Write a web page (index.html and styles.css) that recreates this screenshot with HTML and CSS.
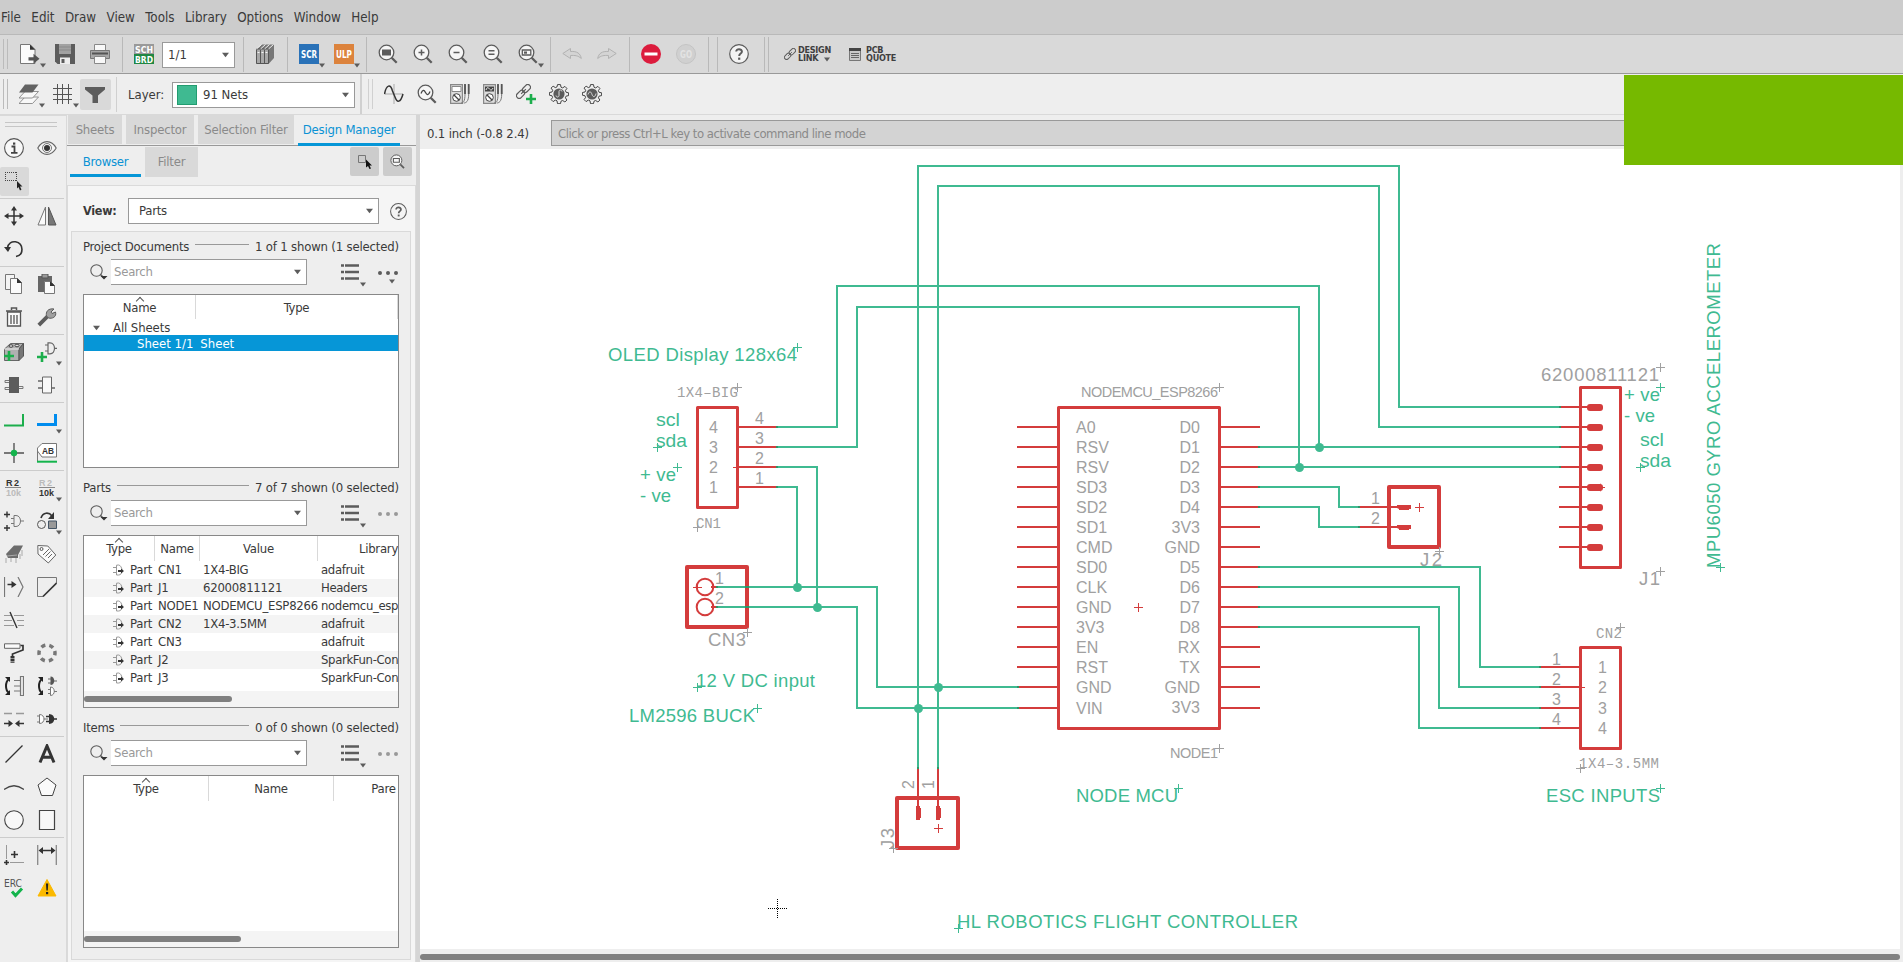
FILE: index.html
```html
<!DOCTYPE html>
<html lang="en">
<head>
<meta charset="utf-8">
<title>Schematic editor</title>
<link rel="stylesheet" href="styles.css">
</head>
<body>
<svg class="defs" width="0" height="0">
  <symbol id="drop" viewBox="0 0 6 5"><path d="M0 .5h6L3 4.5z" fill="#5c5c5c"/></symbol>
  <symbol id="loupe" viewBox="0 0 20 20"><circle cx="8.5" cy="8.5" r="7.3" fill="#f6f6f6" stroke="#5c5c5c" stroke-width="1.3"/><path d="M13.7 13.7l5 5" stroke="#5c5c5c" stroke-width="2.3"/></symbol>
  <symbol id="search" viewBox="0 0 18 16"><circle cx="6.5" cy="6.5" r="5.7" fill="none" stroke="#5c5c5c" stroke-width="1.1"/><path d="M10.5 10.5l3 3" stroke="#5c5c5c" stroke-width="1.6"/><path d="M10.5 12h7l-3.5 3.5z" fill="#333"/></symbol>
  <symbol id="list" viewBox="0 0 18 16"><path d="M0 1.5h3M0 8h3M0 14.5h3M4 1.5h14M4 8h14M4 14.5h14" stroke="#5c5c5c" stroke-width="2.4"/></symbol>
  <symbol id="dots" viewBox="0 0 20 4"><circle cx="2" cy="2" r="2"/><circle cx="10" cy="2" r="2"/><circle cx="18" cy="2" r="2"/></symbol>
  <symbol id="help" viewBox="0 0 20 20"><circle cx="10" cy="10" r="9.3" fill="#f4f4f4" stroke="#5c5c5c" stroke-width="1.2"/><path d="M7.2 7.6C7.2 4.3 13 4.500 12.900 7.700C12.800 9.600 10.200 9.600 10.200 12" fill="none" stroke="#5c5c5c" stroke-width="2"/><rect x="9.100" y="13.600" width="2.200" height="2.200" fill="#5c5c5c"/></symbol>
  <symbol id="gate" viewBox="0 0 11 12"><path d="M0 3.500h4M0 8.500h4M3.500 1.200V11h2.200c2 0 3.300-2 3.300-4.500S7.500 1 5.500 1z" fill="none" stroke="#999"/><path d="M5 6h3V4.500l3 2.500-3 2.500V8H5z" fill="#333"/></symbol>
  <symbol id="link" viewBox="0 0 14 14"><g fill="none" stroke="#5c5c5c" stroke-width="1.100"><rect x="5.500" y="1.800" width="8.500" height="5" rx="2.500" transform="rotate(-45 9.700 4.300)"/><rect x="0" y="7.200" width="8.500" height="5" rx="2.500" transform="rotate(-45 4.200 9.700)"/><path d="M4.800 9.200l4.400-4.400"/></g></symbol>
  <symbol id="meter" viewBox="0 0 20 20"><path d="M.6.6h11.800v18.800H.6z" fill="#ddd" stroke="#888" stroke-width="1.200"/><circle cx="6.500" cy="13.500" r="3.800" fill="#fff" stroke="#444"/><path d="M4 11l5 5" stroke="#444" stroke-width="1.200"/><path d="M15 1v9c0 8-2 9-4 9M18.700 1v9c0 8-3 9-5 9" fill="none" stroke="#777"/><path d="M15 0v10M18.700 0v10" stroke="#555" stroke-width="1.800"/></symbol>
  <symbol id="gear" viewBox="0 0 20 20"><path d="M8.500.6h3l.5 2.600 1.700.7 2.200-1.500 2 2-1.500 2.200.7 1.700 2.500.5v2.800l-2.500.5-.7 1.700 1.500 2.200-2 2-2.200-1.500-1.700.7-.5 2.500h-3L8 16.800l-1.700-.7-2.200 1.500-2-2 1.500-2.200-.7-1.700-2.500-.5V8.500L3 8l.7-1.700-1.600-2.200 2-2 2.200 1.500L8 2.900z" fill="#eee" stroke="#444"/><circle cx="10" cy="10" r="5.600" fill="#5c5c5c"/></symbol>
</svg>

<nav class="menubar"><span>File</span><span>Edit</span><span>Draw</span><span>View</span><span>Tools</span><span>Library</span><span>Options</span><span>Window</span><span>Help</span></nav>

<div class="toolbar main">
  <i class="handle"></i>
  <b class="btn"><svg width="20" height="20"><path d="M.5.5h9.500l5 5V19.500H.5z" fill="#fbfbfb" stroke="#777"/><path d="M10 .5v5.300h5.300z" fill="#333"/><path d="M8.500 13.200h5V9.800l6 5-6 5v-3.300h-5z" fill="#555"/></svg><svg class="drop"><use href="#drop"/></svg></b>
  <b class="btn"><svg width="20" height="20"><path d="M0 0h20v20H2.500L0 17.500z" fill="#5c5c5c"/><path d="M4 0h12v10H4z" fill="#a2a2a2"/><path d="M4 3h12M4 6h12" stroke="#8a8a8a"/><path d="M5 13.500h10V20H5z" fill="#eee"/><path d="M6.500 15h3v4h-3z" fill="#5c5c5c"/></svg></b>
  <b class="btn"><svg width="20" height="20"><path d="M4.500.5h11V7h-11z" fill="#f8f8f8" stroke="#888"/><path d="M.5 6.500h19v8H.5z" fill="#a7a7a7" stroke="#777"/><path d="M2 9.500h16" stroke="#555" stroke-width="2"/><path d="M4.500 12.500h11v7h-11z" fill="#f8f8f8" stroke="#888"/></svg></b>
  <i class="sep n"></i>
  <b class="btn sch"><svg width="20" height="20"><path d="M0 0h20v10H0z" fill="#999"/><path d="M0 10h20v10H0z" fill="#208743"/><g font-size="9" font-weight="700" fill="#fff"><text x="1" y="9" textLength="18" lengthAdjust="spacingAndGlyphs">SCH</text><text x="1" y="18.500" textLength="18" lengthAdjust="spacingAndGlyphs">BRD</text></g></svg></b>
  <div class="combo page"><span>1/1</span><svg class="drop"><use href="#drop"/></svg></div>
  <i class="sep c"></i>
  <b class="btn"><svg width="20" height="20"><path d="M.5 5L6 .5h12V14l-5 5.500H.5z" fill="#777"/><path d="M.5 5h12v14.500H.5zM4.500 5v14.500M8.500 5v14.500" fill="#a8a8a8" stroke="#555"/><path d="M.5 5l5-4.500M4.500 5l5-4.500M8.500 5l5-4.500M12.500 5l5-4.500" stroke="#eee"/><path d="M1.500 8.500h2M5.500 8.500h2M9.500 8.500h2" stroke="#f5f5f5"/></svg></b>
  <i class="sep b"></i>
  <b class="btn"><svg width="20" height="20"><path d="M0 0h20v20H0z" fill="#2a72b8"/><text x="2" y="14" font-size="10" font-weight="700" fill="#fff" textLength="16" lengthAdjust="spacingAndGlyphs">SCR</text></svg><svg class="drop"><use href="#drop"/></svg></b>
  <b class="btn"><svg width="20" height="20"><path d="M0 0h20v20H0z" fill="#dc833d"/><text x="2" y="14" font-size="10" font-weight="700" fill="#fff" textLength="16" lengthAdjust="spacingAndGlyphs">ULP</text></svg><svg class="drop"><use href="#drop"/></svg></b>
  <i class="sep n"></i>
  <b class="btn"><svg width="20" height="20"><use href="#loupe"/><path d="M4 5.500h9v6H4z" fill="#5c5c5c"/></svg></b>
  <b class="btn"><svg width="20" height="20"><use href="#loupe"/><path d="M5.500 8.500h6M8.500 5.500v6" stroke="#5c5c5c" stroke-width="1.500"/></svg></b>
  <b class="btn"><svg width="20" height="20"><use href="#loupe"/><path d="M5.500 8.500h6" stroke="#5c5c5c" stroke-width="1.500"/></svg></b>
  <b class="btn"><svg width="20" height="20"><use href="#loupe"/><path d="M5.500 6.800h6M5.500 10.200h6" stroke="#5c5c5c" stroke-width="1.500"/></svg></b>
  <b class="btn"><svg width="20" height="20"><use href="#loupe"/><path d="M4.300 6h8.500v5H4.300z" fill="none" stroke="#5c5c5c" stroke-width="1.300"/><path d="M6 7.500h3v2.200H6z" fill="#5c5c5c"/></svg><svg class="drop"><use href="#drop"/></svg></b>
  <i class="sep n"></i>
  <b class="btn"><svg width="20" height="20"><path d="M.8 9.500L8.500 4.500v3C15 7 18.500 9.500 19.300 14.500 16 11.500 13 11.300 8.500 11.500v3z" fill="#d4d4d4" stroke="#b2b2b2"/></svg></b>
  <b class="btn"><svg width="20" height="20"><path d="M19.200 9.500L11.500 4.500v3C5 7 1.500 9.500.7 14.500 4 11.500 7 11.300 11.500 11.500v3z" fill="#d4d4d4" stroke="#b2b2b2"/></svg></b>
  <i class="sep n"></i>
  <b class="btn"><svg width="20" height="20"><circle cx="10" cy="10" r="10" fill="#dc1c3d"/><path d="M3.500 10h13" stroke="#fff" stroke-width="3"/></svg></b>
  <b class="btn"><svg width="20" height="20"><circle cx="10" cy="10" r="9.500" fill="#d0d0d0" stroke="#c4c4c4"/><text x="4" y="13.700" font-size="10" fill="#e3e3e3" textLength="12" lengthAdjust="spacingAndGlyphs">GO</text></svg></b>
  <i class="sep d"></i><i class="sep e"></i>
  <b class="btn"><svg width="20" height="20"><use href="#help"/></svg></b>
  <i class="sep f"></i><i class="sep g"></i>
  <b class="btn wide"><svg width="12" height="12"><use href="#link"/></svg><span>DESIGN<br>LINK</span><svg class="drop lk"><use href="#drop"/></svg></b>
  <b class="btn wide quote"><svg width="12" height="13"><path d="M.5.500h11v12H.5z" fill="#c9c9c9" stroke="#777"/><path d="M0 1.500h12" stroke="#444" stroke-width="3"/><path d="M2 5.500h8M2 7.500h8M2 9.500h8" stroke="#666"/></svg><span>PCB<br>QUOTE</span></b>
</div>

<div class="toolbar second">
  <i class="handle"></i>
  <b class="btn tall"><svg width="20" height="20"><g stroke="#888" stroke-width=".9"><path d="M0 19.500l6-6.500h13.500l-6 6.500z" fill="#f8f8f8"/><path d="M0 14l6-6.500h13.500l-6 6.500z" fill="#f8f8f8"/></g><path d="M0 8.500L6 .5h13.500l-6 8z" fill="#626262"/></svg><svg class="drop"><use href="#drop"/></svg></b>
  <b class="btn tall gridb"><svg width="20" height="20"><path d="M0 4.500h19M0 10.500h19M0 15.500h19M4.500 0v20M9.500 0v20M15.500 0v20" stroke="#555"/></svg><svg class="drop"><use href="#drop"/></svg></b>
  <b class="btn filter"><svg width="22" height="18"><path d="M1 1h20v2.500l-7 6V17H8.500V9.500L1 3.500z" fill="#5c5c5c"/></svg></b>
  <i class="sep h"></i>
  <span class="layerlabel">Layer:</span>
  <div class="combo layer"><i class="swatch"></i><span>91 Nets</span><svg class="drop"><use href="#drop"/></svg></div>
  <i class="sep k"></i><i class="sep l"></i><i class="sep m"></i>
  <b class="btn s"><svg width="20" height="20"><path d="M10 0v20M1 10h18" stroke="#aaa"/><path d="M.5 10C2.500 0 6.500 0 8.500 7l2.500 6c2 6 5.500 6 8-3" fill="none" stroke="#333" stroke-width="1.500"/></svg></b>
  <b class="btn s"><svg width="20" height="20"><use href="#loupe"/><path d="M4 9.500c1.500-4 3-4 4.500-1s3 3 4.500-1" fill="none" stroke="#444" stroke-width="1.300"/></svg></b>
  <b class="btn s"><svg width="20" height="20"><use href="#meter"/><path d="M2 2.500h9v5H2z" fill="#fff" stroke="#888"/></svg></b>
  <b class="btn s"><svg width="20" height="20"><use href="#meter"/><path d="M2 2.500h9v5H2z" fill="#444"/><path d="M3 6c1.500-4 2.500-2 3.500-1s2 2 3.500-1" fill="none" stroke="#eee"/></svg></b>
  <b class="btn s"><svg width="20" height="20"><svg width="15" height="15"><use href="#link"/></svg><path d="M15 10v10M10 15h10" stroke="#1cae4c" stroke-width="2.600"/></svg></b>
  <b class="btn s"><svg width="20" height="20"><use href="#gear"/><path d="M7 11.500c0 2 3 2 3 0v-4c0-2 3-2 3 0" fill="none" stroke="#ddd"/></svg></b>
  <b class="btn s"><svg width="20" height="20"><use href="#gear"/><path d="M6 10.500c1.500-4 3-3 4 0s3 3 4-1" fill="none" stroke="#ddd"/></svg></b>
</div>

<main class="work">
  <aside class="tools">
    <i class="grip"></i>
    <div class="row">
      <b><svg width="20" height="20"><circle cx="10" cy="10" r="9.400" fill="#f8f8f8" stroke="#555" stroke-width="1.100"/><path d="M7.500 8.500H10.500V14.500M7 14.800h6.500" fill="none" stroke="#444" stroke-width="1.800"/><path d="M9 4.500h2.300v2.200H9z" fill="#444"/></svg></b>
      <b><svg width="20" height="20"><path d="M.8 10C5.500 1.500 14.500 1.500 19.200 10 14.500 18.500 5.500 18.500.8 10z" fill="#f6f6f6" stroke="#666" stroke-width="1.100"/><circle cx="10" cy="10" r="4.500" fill="none" stroke="#777"/><circle cx="10" cy="10" r="3" fill="#333"/></svg></b>
    </div>
    <div class="row">
      <b class="on"><svg width="20" height="20"><path d="M1 1.500h12M1 9.500h12M1.500 1v9M12.500 1v9" stroke="#444" stroke-dasharray="1 1"/><path d="M13 10l5.500 5.500h-2.500l1.500 3-1.500 1-1.500-3.500-1.500 1.500z" fill="#222"/></svg></b><b></b>
    </div>
    <i class="rule"></i>
    <div class="row">
      <b><svg width="20" height="20"><path d="M2 10h16M10 2v16" stroke="#333" stroke-width="1.500"/><path d="M10 0l3 4.500H7zM10 20l3-4.500H7zM0 10l4.500-3v6zM20 10l-4.500-3v6z" fill="#333"/></svg></b>
      <b><svg width="20" height="20"><path d="M8.500 1v18H1z" fill="#fafafa" stroke="#777"/><path d="M11.500 1v18H19z" fill="#777" stroke="#555"/></svg></b>
    </div>
    <div class="row">
      <b><svg width="20" height="20"><path d="M3.500 9C4 4 8 2.200 11.500 2.800 20 4.500 20 16 12 17.500" fill="none" stroke="#333" stroke-width="1.600"/><path d="M0 8h7l-3 5z" fill="#333"/></svg></b><b></b>
    </div>
    <i class="rule"></i>
    <div class="row">
      <b><svg width="20" height="20"><path d="M1.500.500h9v15h-9z" fill="#f4f4f4" stroke="#777"/><path d="M6.500 4.500h7l4 4v11h-11z" fill="#fafafa" stroke="#777"/><path d="M13 4v5h5z" fill="#333"/></svg></b>
      <b><svg width="20" height="20"><path d="M1 2h14v16H1z" fill="#666"/><path d="M5 0h6v4H5z" fill="#999" stroke="#555"/><path d="M7.500 7.500h6l4 4v8h-10z" fill="#fafafa" stroke="#777"/><path d="M13 7v5h5z" fill="#333"/></svg></b>
    </div>
    <div class="row">
      <b><svg width="20" height="20"><path d="M3.500 5h13v14h-13z" fill="#fafafa" stroke="#555" stroke-width="1.300"/><path d="M2 4h16M7.500 3V1h5v2" fill="none" stroke="#555" stroke-width="1.500"/><path d="M7 8v9M10 8v9M13 8v9" stroke="#555" stroke-width="1.300"/></svg></b>
      <b><svg width="20" height="20"><path d="M1.800 18.200l9-9" stroke="#5c5c5c" stroke-width="3.800"/><path d="M17 2l-3 3 1 1.500 3.500-1.500c1.500 5-3.500 7-7 6l-2-2c-1-4 1.500-8 7.500-7z" fill="#a0a0a0" stroke="#5c5c5c"/></svg></b>
    </div>
    <i class="rule"></i>
    <div class="row">
      <b><svg width="20" height="20"><path d="M.5 7l6-5.500h13L15 7v11.500H.5z" fill="#b0b0b0" stroke="#666"/><path d="M15 7l4.500-5.500V14L15 18.500z" fill="#777" stroke="#555"/><path d="M.5 7H15" stroke="#eee"/><ellipse cx="7" cy="4" rx="2" ry="1.300" fill="#ddd" stroke="#444"/><ellipse cx="13" cy="3.500" rx="2" ry="1.300" fill="#ddd" stroke="#444"/><path d="M5 9v10M0 14h10" stroke="#1cae4c" stroke-width="2.600"/></svg></b>
      <b><svg width="20" height="20"><path d="M8 3h3M8 9h3M11 .8v11h2c6 0 6-11 0-11zM17 6.300h3" fill="none" stroke="#666" stroke-width="1.200"/><path d="M5 10v10M0 15h10" stroke="#1cae4c" stroke-width="2.600"/></svg><svg class="drop"><use href="#drop"/></svg></b>
    </div>
    <div class="row">
      <b><svg width="20" height="20"><path d="M5 2h10v16H5z" fill="#5c5c5c"/><path d="M5 5.500H1v2h4M5 12.500H1v2h4M15 11.500h4v2h-4" fill="none" stroke="#777"/></svg></b>
      <b><svg width="20" height="20"><path d="M5.500 2h9v16h-9z" fill="#f8f8f8" stroke="#666"/><path d="M1 6h4.500M1 13h4.500M14.500 13H18" stroke="#666" stroke-width="1.500"/></svg></b>
    </div>
    <i class="rule"></i>
    <div class="row">
      <b><svg width="20" height="20"><path d="M0 15.500h19V4" fill="none" stroke="#1cae4c" stroke-width="2"/></svg></b>
      <b><svg width="20" height="20"><path d="M0 14.500h18.500V4" fill="none" stroke="#008cee" stroke-width="3"/></svg><svg class="drop"><use href="#drop"/></svg></b>
    </div>
    <div class="row">
      <b><svg width="20" height="20"><path d="M0 10h20M10 0v20" stroke="#777" stroke-width="1.800"/><circle cx="10" cy="10" r="3.200" fill="#13b44c"/></svg></b>
      <b><svg width="20" height="20"><path d="M5 .5h14.500v13.500H5L.5 8V5z" fill="#fff" stroke="#777"/><path d="M.5 6v13" stroke="#777"/><path d="M0 18.700h20" stroke="#13b44c" stroke-width="2"/><text x="5" y="11" font-size="9.500" font-weight="700" font-family="Liberation Sans" fill="#333" textLength="12" lengthAdjust="spacingAndGlyphs">AB</text></svg></b>
    </div>
    <i class="rule"></i>
    <div class="row lib">
      <b><svg width="20" height="20"><path d="M1 9.500h16" stroke="#888"/><text x="2" y="7.500" fill="#333" textLength="13">R2</text><text x="2" y="17.500" fill="#bbb" textLength="15">10k</text></svg></b>
      <b><svg width="20" height="20"><path d="M2 9.500h16" stroke="#888"/><text x="2" y="7.500" fill="#bbb" textLength="13">R2</text><text x="2" y="17.500" fill="#333" textLength="15">10k</text></svg><svg class="drop"><use href="#drop"/></svg></b>
    </div>
    <div class="row">
      <b><svg width="20" height="20"><path d="M0 3.500h6M3 .5v6M0 17h6M3 14v6" stroke="#333" stroke-width="1.400"/><path d="M7 7.500h3M7 12.500h3M10 4.500v11h2c6 0 6-11 0-11zM16.500 10H20" fill="none" stroke="#777"/></svg></b>
      <b><svg width="20" height="20"><circle cx="4.500" cy="13.500" r="4" fill="none" stroke="#555"/><path d="M11.500 10h8v7.500h-8z" fill="#999" stroke="#456"/><path d="M4 7C6 1 12 1 15 5" fill="none" stroke="#333" stroke-width="1.700"/><path d="M17 1v7h-6z" fill="#333"/></svg><svg class="drop"><use href="#drop"/></svg></b>
    </div>
    <div class="row">
      <b><svg width="20" height="20"><path d="M2 10L10 1.500h9L14 11v3H4z" fill="#6c6c6c"/><path d="M3 12l10-1M2 19v-5M7 18v-4M12 19v-5M16 15v-5M18 12V6" fill="none" stroke="#aaa"/></svg></b>
      <b><svg width="20" height="20"><path d="M.8 1.500l10 .5 8 9-7.500 8L1 10z" fill="#fafafa" stroke="#666"/><circle cx="4.500" cy="5" r="1.500" fill="none" stroke="#555"/><path d="M6 11l6-6M8.500 12.500l5-5M11 14l4-4" stroke="#666"/></svg></b>
    </div>
    <div class="row">
      <b><svg width="20" height="20"><path d="M.5 0v20M14 0l5 10-5 10" fill="none" stroke="#777" stroke-width="1.200"/><path d="M3.500 7.500h5" stroke="#333" stroke-width="1.500"/><path d="M7.500 4l5 3.500-5 3.500z" fill="#333"/></svg></b>
      <b><svg width="20" height="20"><path d="M6 19.500H.5V.5h19V6" fill="none" stroke="#777"/><path d="M6 19.500L19.500 6" stroke="#333" stroke-width="1.600"/></svg></b>
    </div>
    <div class="row">
      <b><svg width="20" height="20"><path d="M0 5.500h7M10 5.500h10M0 10.500h8M13 10.500h7M0 15.500h10M14 15.500h6" stroke="#999"/><path d="M6 2l7 16" stroke="#333" stroke-width="1.400"/></svg></b><b></b>
    </div>
    <div class="row">
      <b><svg width="20" height="20"><path d="M.5.800h15.500v4.500H.5z" fill="#fafafa" stroke="#666"/><path d="M16.500 2.500h2.500v4.500L8.500 11v2" fill="none" stroke="#333" stroke-width="1.700"/><path d="M8.500 13v7" stroke="#333" stroke-width="4" stroke-dasharray="2.500 .6"/></svg></b>
      <b><svg width="20" height="20"><circle cx="10" cy="10" r="8" fill="none" stroke="#777" stroke-width="3.500" stroke-dasharray="4.400 3.978" transform="rotate(-15 10 10)"/></svg></b>
    </div>
    <div class="row">
      <b><svg width="20" height="20"><path d="M5 3c-4 3-4 11 0 14" fill="none" stroke="#222" stroke-width="2"/><path d="M1 1h5v5zM1 19h5v-5z" fill="#222"/><path d="M16.500.500h3v19h-3zM10 4.500h6M10 10h6M10 15h6" fill="none" stroke="#777" stroke-width="1.200"/></svg></b>
      <b><svg width="20" height="20"><path d="M5 3c-4 3-4 11 0 14" fill="none" stroke="#222" stroke-width="2"/><path d="M1 1h5v5zM1 19h5v-5z" fill="#222"/><path d="M11 3h3M11 7h3M16 5h4" stroke="#666"/><path d="M13.500.500v8.500c5 0 5-8.500 0-8.500z" fill="#555"/><path d="M11 13.500h3M11 17.500h3M17 15.500h3M13.500 11v8.500c5 0 5-8.500 0-8.500z" fill="#fff" stroke="#777"/></svg></b>
    </div>
    <div class="row">
      <b><svg width="20" height="20"><path d="M0 4.500h8M12 4.500h8" stroke="#999" stroke-width="1.500"/><path d="M0 14.500h5M15 14.500h5" stroke="#333" stroke-width="1.500"/><path d="M4.500 11l4.500 3.500-4.500 3.500zM15.500 11L11 14.500l4.500 3.500z" fill="#333"/></svg></b>
      <b><svg width="20" height="20"><path d="M0 7h2.500M0 13h2.500M2.500 5.500v9c6 0 6-9 0-9zM7 10h4" fill="#fff" stroke="#777"/><path d="M12 5v10c7 0 7-10 0-10z" fill="#333"/><path d="M9 7.500h4M9 12.500h4M16 10h4" stroke="#333" stroke-width="1.300"/></svg></b>
    </div>
    <i class="rule"></i>
    <div class="row">
      <b><svg width="20" height="20"><path d="M1.500 18.500l17-17" stroke="#333" stroke-width="1.300"/></svg></b>
      <b><svg width="20" height="20"><path d="M3 18.500L10 2l7 16.500M5 13.200h10" fill="none" stroke="#333" stroke-width="3"/></svg></b>
    </div>
    <div class="row">
      <b><svg width="20" height="20"><path d="M0 12.500q10-7.500 20 0" fill="none" stroke="#444" stroke-width="1.300"/></svg></b>
      <b><svg width="20" height="20"><path d="M10 1l9 7-3.500 10.500h-11L1 8z" fill="#fafafa" stroke="#444"/></svg></b>
    </div>
    <div class="row">
      <b><svg width="20" height="20"><circle cx="10" cy="10" r="9.300" fill="#f8f8f8" stroke="#444" stroke-width="1.100"/></svg></b>
      <b><svg width="20" height="20"><path d="M2.500.500h15v19h-15z" fill="#f8f8f8" stroke="#444" stroke-width="1.200"/></svg></b>
    </div>
    <i class="rule"></i>
    <div class="row">
      <b><svg width="20" height="20"><path d="M2.500 0v14M6 17.500h14" stroke="#999"/><path d="M0 17.500h5M2.500 15v5M7 9.500h7M10.500 6v7" stroke="#333" stroke-width="1.600"/></svg></b>
      <b><svg width="20" height="20"><path d="M.7 0v20M19.300 0v20" stroke="#888" stroke-width="1.300"/><path d="M4 5.500h12" stroke="#333" stroke-width="1.500"/><path d="M1.500 5.500L6 2v7zM18.500 5.500L14 2v7z" fill="#333"/></svg></b>
    </div>
    <div class="row">
      <b><svg width="20" height="20"><text x="0" y="8.500" font-size="11" fill="#555" textLength="18" lengthAdjust="spacingAndGlyphs">ERC</text><path d="M8 13.500l3.500 4L18 10.500" fill="none" stroke="#13b44c" stroke-width="3"/></svg></b>
      <b><svg width="20" height="20"><path d="M10 1.500l9 16.500H1z" fill="#fbb900" stroke="#fbb900" stroke-linejoin="round"/><path d="M9 5.500h2.200l-.4 7H9.400z" fill="#222"/><path d="M9 14h2.200v2.200H9z" fill="#222"/></svg></b>
    </div>
  </aside>

  <section class="panel">
    <div class="tabs"><span style="width:54px">Sheets</span><span style="width:68px">Inspector</span><span style="width:96px">Selection Filter</span><span class="active" style="width:102px">Design Manager</span></div>
    <div class="subtabs"><span class="active">Browser</span><span class="off">Filter</span>
      <b><svg width="14" height="14"><path d="M.5.500h7v7h-7z" fill="none" stroke="#777"/><path d="M8 4.500l6 6h-2.500l1.500 3-1.500.500-1.500-3L8 12.500z" fill="#111"/></svg></b>
      <b><svg width="15" height="15" viewBox="0 0 20 20"><use href="#loupe"/><path d="M4.500 6h8v5h-8z" fill="none" stroke="#5c5c5c" stroke-width="1.500"/></svg></b>
    </div>
    <div class="pane">
      <div class="view"><strong>View:</strong><div class="combo"><span>Parts</span><svg class="drop"><use href="#drop"/></svg></div><svg width="17" height="17" viewBox="0 0 20 20"><use href="#help"/></svg></div>
      <div class="group">
        <div class="title"><span>Project Documents</span><i></i><span>1 of 1 shown (1 selected)</span></div>
        <div class="find"><svg width="18" height="16"><use href="#search"/></svg><div class="combo"><span>Search</span><svg class="drop"><use href="#drop"/></svg></div><svg class="li" width="18" height="16"><use href="#list"/></svg><svg class="drop d1"><use href="#drop"/></svg><svg class="dt" width="20" height="4"><use href="#dots"/></svg><svg class="drop d2"><use href="#drop"/></svg></div>
        <div class="table docs">
          <div class="head"><span>Name<em></em></span><span>Type</span></div>
          <div class="tree"><svg class="drop"><use href="#drop"/></svg>All Sheets</div>
          <div class="tree sel"><span>Sheet 1/1</span><span>Sheet</span></div>
        </div>
        <div class="title"><span>Parts</span><i></i><span>7 of 7 shown (0 selected)</span></div>
        <div class="find dim"><svg width="18" height="16"><use href="#search"/></svg><div class="combo"><span>Search</span><svg class="drop"><use href="#drop"/></svg></div><svg class="li" width="18" height="16"><use href="#list"/></svg><svg class="drop d1"><use href="#drop"/></svg><svg class="dt" width="20" height="4"><use href="#dots"/></svg></div>
        <div class="table parts">
          <div class="head"><span>Type<em></em></span><span>Name</span><span>Value</span><span>Library</span></div>
          <div class="part"><svg><use href="#gate"/></svg><span>Part</span><span>CN1</span><span>1X4-BIG</span><span>adafruit</span></div>
          <div class="part"><svg><use href="#gate"/></svg><span>Part</span><span>J1</span><span>62000811121</span><span>Headers</span></div>
          <div class="part"><svg><use href="#gate"/></svg><span>Part</span><span>NODE1</span><span>NODEMCU_ESP8266</span><span>nodemcu_esp</span></div>
          <div class="part"><svg><use href="#gate"/></svg><span>Part</span><span>CN2</span><span>1X4-3.5MM</span><span>adafruit</span></div>
          <div class="part"><svg><use href="#gate"/></svg><span>Part</span><span>CN3</span><span></span><span>adafruit</span></div>
          <div class="part"><svg><use href="#gate"/></svg><span>Part</span><span>J2</span><span></span><span>SparkFun-Conn</span></div>
          <div class="part"><svg><use href="#gate"/></svg><span>Part</span><span>J3</span><span></span><span>SparkFun-Conn</span></div>
          <div class="scroll"><i style="width:148px"></i></div>
        </div>
        <div class="title"><span>Items</span><i></i><span>0 of 0 shown (0 selected)</span></div>
        <div class="find dim"><svg width="18" height="16"><use href="#search"/></svg><div class="combo"><span>Search</span><svg class="drop"><use href="#drop"/></svg></div><svg class="li" width="18" height="16"><use href="#list"/></svg><svg class="drop d1"><use href="#drop"/></svg><svg class="dt" width="20" height="4"><use href="#dots"/></svg></div>
        <div class="table items">
          <div class="head"><span>Type<em></em></span><span>Name</span><span class="cut">Pare</span></div>
          <div class="scroll"><i style="width:157px"></i></div>
        </div>
      </div>
    </div>
  </section>

  <section class="editor">
    <div class="status"><span>0.1 inch (-0.8 2.4)</span><div class="command">Click or press Ctrl+L key to activate command line mode</div></div>
    <svg class="sheet" width="1480" height="800" viewBox="420 149 1480 800">
      <rect class="body heavy" x="687" y="567" width="60" height="60"/>
      <g class="net">
        <path d="M918 768V166H1399V407H1561M938 768V186H1379V427H1561"/>
        <path d="M776 427H837V286H1319V447M776 447H857V307H1299V467"/>
        <path d="M776 467H817V607M776 487H797V587"/>
        <path d="M715 587H877V687H1019M715 607H857V708H1019"/>
        <path d="M1258 447H1561M1258 467H1561"/>
        <path d="M1258 487H1339V507H1360M1258 507H1319V527H1360"/>
        <path d="M1258 567H1480V667H1541M1258 587H1459V687H1541M1258 607H1439V708H1541M1258 627H1419V728H1541"/>
      </g>
      <g class="dot"><circle cx="1319.500" cy="447.500" r="4.500"/><circle cx="1299.500" cy="467.500" r="4.500"/><circle cx="797.500" cy="587.500" r="4.500"/><circle cx="817.500" cy="607.500" r="4.500"/><circle cx="938.500" cy="687.500" r="4.500"/><circle cx="918.500" cy="708.500" r="4.500"/></g>
      <g class="pin">
        <path d="M738 427h38M738 447h38M738 467h38M738 487h38M711 587h5M711 607h5"/>
        <path d="M1017 427h41M1017 447h41M1017 467h41M1017 487h41M1017 507h41M1017 527h41M1017 547h41M1017 567h41M1017 587h41M1017 607h41M1017 627h41M1017 647h41M1017 667h41M1019 687h39M1019 708h39"/>
        <path d="M1220 427h40M1220 447h38M1220 467h38M1220 487h38M1220 507h38M1220 527h40M1220 547h40M1220 567h38M1220 587h38M1220 607h38M1220 627h38M1220 647h40M1220 667h40M1220 687h40M1220 708h40"/>
        <path d="M1561 407h27M1561 427h27M1561 447h27M1561 467h27M1559 487h29M1559 507h29M1559 527h29M1559 547h29"/>
        <path d="M1360 507h38M1360 527h38M1541 667h39M1541 687h39M1541 708h39M1541 728h39M918 768v39M938 768v39"/>
      </g>
      <path class="joint" d="M776 427h2M776 447h2M776 467h2M776 487h2M716 587h2M716 607h2M1017 687h2M1017 708h2M1258 447h2M1258 467h2M1258 487h2M1258 507h2M1258 567h2M1258 587h2M1258 607h2M1258 627h2M1559 407h2M1559 427h2M1559 447h2M1559 467h2M1358 507h2M1358 527h2M1539 667h2M1539 687h2M1539 708h2M1539 728h2M917 768h2M937 768h2M745 587h4M745 607h4"/>
      <g class="body">
        <rect x="697.500" y="407.500" width="40" height="100"/><rect x="1058.500" y="407.500" width="161" height="321"/><rect x="1580.500" y="387.500" width="40" height="180"/><rect x="1580.500" y="647.500" width="40" height="101"/>
        <g class="heavy"><rect x="1389" y="487" width="50" height="60"/><rect x="897" y="798" width="61" height="50"/></g>
        <g class="ring"><circle cx="705" cy="587" r="8.300"/><circle cx="705" cy="607" r="8.300"/></g>
      </g>
      <g class="pad">
        <rect x="1587" y="404" width="16" height="7" rx="3"/><rect x="1587" y="424" width="16" height="7" rx="3"/><rect x="1587" y="444" width="16" height="7" rx="3"/><rect x="1587" y="464" width="16" height="7" rx="3"/><rect x="1587" y="484" width="16" height="7" rx="3"/><rect x="1587" y="504" width="16" height="7" rx="3"/><rect x="1587" y="524" width="16" height="7" rx="3"/><rect x="1587" y="544" width="16" height="7" rx="3"/>
        <path d="M1600 483l2 4h3v1h-3l-2 4zM1397 505h14v4h-2v1h-10v-1l-2-1zM1397 525h14v4h-2v1h-10v-1l-2-1zM916 806h4v2h1v10h-1v2h-4zM936 806h4v2h1v10h-1v2h-4z"/>
      </g>
      <path class="cross red" d="M1134 607.500h9M1138.500 603v9M1415 507.500h9M1419.500 503v9M934 828.500h9M938.500 824v9M733 467.500h6M1581 687.500h4M693 587.500h9M697.500 585v5"/>
      <path class="cross green" d="M793 347.500h9M797.500 343v9M653 447.500h9M657.500 443v9M673 467.500h9M677.500 463v9M693 687.500h9M697.500 683v9M753 708.500h9M757.500 704v9M954 928.500h9M958.500 924v9M1174 788.500h9M1178.500 784v9M1656 387.500h9M1660.500 383v9M1636 467.500h9M1640.500 463v9M1716 567.500h9M1720.500 563v9M1656 788.500h9M1660.500 784v9"/>
      <path class="cross gray" d="M733 387.500h9M737.500 383v9M693 527.500h9M697.500 523v9M743 632.500h9M747.500 628v9M889 848.500h9M893.500 844v9M1215 387.500h9M1219.500 383v9M1215 748.500h9M1219.500 744v9M1435 551.500h9M1439.500 547v9M1656 367.500h9M1660.500 363v9M1656 571.500h9M1660.500 567v9M1616 627.500h9M1620.500 623v9M1576 768.500h9M1580.500 764v9"/>
      <path class="cursor" d="M768 908.500h19M777.500 899v19"/>
      <g class="note">
        <text x="608" y="361" textLength="189">OLED Display 128x64</text><text x="656" y="426" textLength="24" lengthAdjust="spacingAndGlyphs">scl</text><text x="656" y="447" textLength="31" lengthAdjust="spacingAndGlyphs">sda</text><text x="640" y="481" textLength="36">+ ve</text><text x="640" y="502" textLength="31">- ve</text>
        <text x="696" y="687" textLength="119">12 V DC input</text><text x="629" y="722" textLength="126">LM2596 BUCK</text><text x="1076" y="802" textLength="102">NODE MCU</text><text x="957" y="928" textLength="341">HL ROBOTICS FLIGHT CONTROLLER</text><text x="1546" y="802" textLength="114">ESC INPUTS</text>
        <text x="1624" y="401" textLength="36">+ ve</text><text x="1624" y="422" textLength="31">- ve</text><text x="1640" y="446" textLength="24" lengthAdjust="spacingAndGlyphs">scl</text><text x="1640" y="467" textLength="31" lengthAdjust="spacingAndGlyphs">sda</text>
        <text transform="translate(1720 568) rotate(-90)" textLength="325">MPU6050 GYRO ACCELEROMETER</text>
      </g>
      <g class="ref big"><text x="708" y="646" textLength="38">CN3</text><text x="1541" y="381" textLength="118">62000811121</text><text x="1639" y="585" textLength="21">J1</text><text x="1420" y="566" textLength="22">J2</text><text transform="translate(894 849) rotate(-90)" textLength="21">J3</text></g>
      <g class="ref small"><text x="1081" y="397" textLength="137">NODEMCU_ESP8266</text><text x="1170" y="758" textLength="48">NODE1</text></g>
      <g class="ref vector"><text x="677" y="397" textLength="61">1X4–BIG</text><text x="696" y="528" textLength="25">CN1</text><text x="1596" y="638" textLength="26">CN2</text><text x="1579" y="768" textLength="80">1X4–3.5MM</text></g>
      <g class="ref mid">
        <text x="755" y="424">4</text><text x="755" y="444">3</text><text x="755" y="464">2</text><text x="755" y="484">1</text>
        <text x="709" y="433">4</text><text x="709" y="453">3</text><text x="709" y="473">2</text><text x="709" y="493">1</text>
        <text x="715" y="584">1</text><text x="715" y="604">2</text><text x="1371" y="504">1</text><text x="1371" y="524">2</text>
        <text x="1552" y="665">1</text><text x="1552" y="685">2</text><text x="1552" y="705">3</text><text x="1552" y="725">4</text>
        <text x="1598" y="673">1</text><text x="1598" y="693">2</text><text x="1598" y="714">3</text><text x="1598" y="734">4</text>
        <text transform="translate(914 789) rotate(-90)">2</text><text transform="translate(934 789) rotate(-90)">1</text>
        <text x="1076" y="433">A0</text><text x="1076" y="453">RSV</text><text x="1076" y="473">RSV</text><text x="1076" y="493">SD3</text><text x="1076" y="513">SD2</text><text x="1076" y="533">SD1</text><text x="1076" y="553">CMD</text><text x="1076" y="573">SD0</text><text x="1076" y="593">CLK</text><text x="1076" y="613">GND</text><text x="1076" y="633">3V3</text><text x="1076" y="653">EN</text><text x="1076" y="673">RST</text><text x="1076" y="693">GND</text><text x="1076" y="714">VIN</text>
        <g text-anchor="end"><text x="1200" y="433">D0</text><text x="1200" y="453">D1</text><text x="1200" y="473">D2</text><text x="1200" y="493">D3</text><text x="1200" y="513">D4</text><text x="1200" y="533">3V3</text><text x="1200" y="553">GND</text><text x="1200" y="573">D5</text><text x="1200" y="593">D6</text><text x="1200" y="613">D7</text><text x="1200" y="633">D8</text><text x="1200" y="653">RX</text><text x="1200" y="673">TX</text><text x="1200" y="693">GND</text><text x="1200" y="713">3V3</text></g>
      </g>
    </svg>
    <div class="hscroll"><i></i></div>
  </section>
</main>
<div class="overlay"></div>
</body>
</html>
```
FILE: styles.css
```css
* { box-sizing: border-box; }
html, body { height: 962px; overflow: hidden; }
body { margin: 0; display: flex; flex-direction: column; background: #eee; color: #3a3a3a; font: 13px/16px "DejaVu Sans Condensed", "DejaVu Sans", sans-serif; font-stretch: condensed; letter-spacing: -.25px; white-space: nowrap; position: relative; }
svg { display: block; flex: none; letter-spacing: 0; }
.defs { position: absolute; }
.drop { width: 6px; height: 5px; }

.menubar { height: 35px; flex: none; background: #ccc; border-bottom: 1px solid #b9b9b9; display: flex; align-items: center; gap: 10.400px; padding: 1px 0 0 1px; font-size: 13.300px; letter-spacing: 0; }

.toolbar { display: flex; align-items: center; flex: none; }
.main { height: 39px; background: #d9d9d9; border-bottom: 1px solid #999; }
.second { height: 41px; background: #eee; border-bottom: 1px solid #d9d9d9; }
.handle { width: 20px; height: 30px; flex: none; background: linear-gradient(#bbb, #bbb) 3px 0/1px 100% no-repeat, linear-gradient(#bbb, #bbb) 7px 0/1px 100% no-repeat; }
.btn { width: 35px; flex: none; display: flex; align-items: center; position: relative; }
.btn .drop { position: absolute; left: 20px; top: 19px; }
.sep { width: 1px; height: 35px; background: #b9b9b9; flex: none; }
.sep.n { margin: 0 11px 0 -3px; }
.sep.c { margin: 0 12px 0 8px; }
.sep.b { margin: 0 11px 0 -4px; }
.sep.d { margin: 0 8px 0 -3px; }
.sep.e { margin-right: 11px; }
.sep.f { margin-right: 3px; }
.sep.g { margin-right: 15px; }
.sch { width: 28px; }
.combo { height: 26px; background: #fff; border: 1px solid #999; display: flex; align-items: center; justify-content: space-between; padding: 0 5px; }
.combo .drop { width: 7px; height: 6px; }
.toolbar .combo { margin-top: 2px; letter-spacing: 0; }
.page { width: 73px; }
.wide { width: 65px; gap: 2px; font-size: 9px; line-height: 8px; font-weight: 700; color: #3f3f3f; }
.wide .drop.lk { left: 40px; top: 11px; }
.quote { gap: 5px; }
.second .handle { width: 19px; }
.second .btn { width: 34px; }
.second .tall .drop { top: 19px; }
.second .gridb { width: 27px; }
.second .filter { width: 31px; height: 31px; margin-top: 1px; background: #d9d9d9; border-radius: 2px; justify-content: center; padding-right: 1px; }
.second .sep { background: #d0d0d0; }
.sep.h { margin: 0 11px 0 5px; }
.layerlabel { width: 44px; padding-top: 2px; letter-spacing: 0; }
.layer { width: 183px; padding: 0 5px 0 4px; }
.layer span { flex: 1; margin-left: 6px; }
.swatch { width: 20px; height: 20px; background: #3fba91; border: 1px solid #229c70; }
.second .sep.k { width: 2px; height: 40px; margin: 0 6px 0 5px; }
.second .sep.l { height: 30px; margin-right: 3px; }
.second .sep.m { height: 30px; margin-right: 11px; }
.second .btn.s { width: 33px; }

.work { flex: 1; display: flex; min-height: 0; }
.tools { width: 66px; flex: none; border-top: 1px solid #d9d9d9; }
.grip { display: block; width: 52px; height: 5px; border: solid #c6c6c6; border-width: 1px 0; margin: 6px 0 4px 5px; }
.row { display: grid; grid-template-columns: 33px 33px; height: 33px; }
.row b { padding: 7px 0 0 4px; position: relative; font-weight: 400; }
.row .drop { position: absolute; left: 23px; top: 26px; }
.row .on { background: #d9d9d9; width: 29px; height: 29px; margin-top: 3px; padding: 4px 0 0 4px; border-radius: 2px; }
.rule { display: block; height: 1px; width: 64px; margin-top: 1px; background: #ccc; }
.lib text { font: 700 9px "Liberation Sans", sans-serif; }

.panel { width: 350px; flex: none; border-left: 1px solid #d9d9d9; display: flex; flex-direction: column; }
.tabs { height: 31px; border-bottom: 1px solid #999; display: flex; gap: 4px; padding-left: 1px; letter-spacing: -.2px; }
.tabs span { background: #d9d9d9; color: #8a8a8a; height: 29px; padding-top: 1px; display: flex; align-items: center; justify-content: center; }
.tabs .active { background: none; color: #0a92d4; border-bottom: 3px solid #0696d7; height: 31px; padding-top: 2px; }
.subtabs { height: 39px; display: flex; padding: 1px 4px 0 3px; }
.subtabs span { height: 30px; display: flex; align-items: center; justify-content: center; }
.subtabs .active { width: 71px; color: #0a92d4; border-bottom: 3px solid #0696d7; padding-top: 3px; }
.subtabs .off { width: 53px; margin: 0 auto 0 4px; background: #d9d9d9; color: #8a8a8a; }
.subtabs b { width: 29px; height: 29px; background: #ccc; border-radius: 2px; margin-left: 4px; display: flex; align-items: center; justify-content: center; }
.pane { flex: 1; background: #f5f5f5; border: 1px solid #dadada; border-bottom: 0; padding: 12px 4px 0 3px; }
.view { display: flex; align-items: center; height: 26px; padding-left: 12px; }
.view strong { width: 45px; font-size: 12.500px; }
.view .combo { width: 251px; padding-left: 10px; margin-right: 11px; }
.group { margin-top: 7px; height: 729px; background: #eee; border: 1px solid #d9d9d9; padding: 0 11px; }
.title { height: 27px; display: flex; align-items: center; gap: 6px; padding-top: 2px; }
.title i { flex: 1; height: 1px; background: #999; margin-top: -5px; }
.title span:last-child { width: 144px; letter-spacing: -.180px; }
.find { height: 26px; position: relative; display: flex; align-items: center; padding-left: 7px; }
.find .combo { width: 196px; margin-left: 3px; padding-left: 3px; border-left: 0; color: #999; }
.find .li { margin: -1px 0 0 34px; }
.find .dt { margin-left: 19px; fill: #5c5c5c; margin-top: 2px; }
.find.dim .dt { fill: #999; }
.find .d1 { position: absolute; left: 277px; top: 23px; }
.find .d2 { position: absolute; left: 306px; top: 20px; }
.table { margin: 9px 0 5px; border: 1px solid #888; background: #fff; height: 173px; overflow: hidden; display: flex; flex-direction: column; }
.docs { height: 174px; }
.head { height: 24px; display: grid; flex: none; }
.parts .head, .items .head { height: 25px; }
.head span { text-align: center; border-right: 1px solid #d9d9d9; padding-top: 5px; position: relative; }
.head em { position: absolute; left: 50%; top: 3px; width: 6px; height: 6px; border: solid #555; border-width: 1px 0 0 1px; transform: translateX(-50%) rotate(45deg); }
.docs .head { grid-template-columns: 112px 202px; }
.tree { height: 16px; display: flex; align-items: center; padding: 1px 0 0 9px; gap: 13px; letter-spacing: -.1px; }
.tree .drop { width: 7px; height: 6px; }
.sel { background: #0696d7; color: #fff; padding-left: 53px; gap: 7px; letter-spacing: 0; }
.parts .head { grid-template-columns: 71px 45px 118px 122px; }
.items .head { grid-template-columns: 125px 125px 100px; }
.part { height: 18px; display: grid; flex: none; grid-template-columns: 29px 17px 28px 45px 118px 1fr; align-items: center; }
.part span:last-child { letter-spacing: -.350px; }
.part svg { width: 11px; height: 12px; grid-column: 2; }
.part:nth-child(odd) { background: #f4f4f4; }
.scroll { margin-top: auto; height: 16px; flex: none; background: #f4f4f4; display: flex; align-items: center; }
.scroll i, .hscroll i { height: 6px; background: #808080; border-radius: 3px; }

.editor { flex: 1; border-left: 4px solid #d5d5d5; }
.status { height: 34px; display: flex; align-items: center; padding: 2px 0 0 7px; }
.status span { width: 124px; letter-spacing: -.150px; padding-top: 1px; }
.command { flex: 1; height: 26px; border: 1px solid #999; background: #d3d3d3; color: #8a8a8a; padding: 5px 6px 0; letter-spacing: -.480px; }
.sheet { background: #fff; }
.hscroll { height: 13px; padding-top: 5px; }
.hscroll i { display: block; width: 1480px; }
.overlay { position: absolute; left: 1624px; top: 75px; width: 279px; height: 90px; background: #76b900; }

.net { fill: none; stroke: #3fba91; stroke-width: 2; shape-rendering: crispEdges; }
.dot { fill: #3fba91; }
.pin { stroke: #d43c3c; stroke-width: 2; shape-rendering: crispEdges; }
.joint { stroke: #2f9467; stroke-width: 2; shape-rendering: crispEdges; }
.body { fill: none; stroke: #d43c3c; stroke-width: 3; stroke-linejoin: round; }
.heavy { stroke-width: 4; }
.ring { stroke-width: 2; }
.pad { fill: #d43c3c; }
.cross { fill: none; stroke-width: 1; shape-rendering: crispEdges; }
.red { stroke: #d43c3c; }
.green { stroke: #3fba91; }
.gray { stroke: #a0a0a0; }
.cursor { stroke: #000; stroke-dasharray: 1 1; shape-rendering: crispEdges; }
.note { fill: #3fba91; font: 18.500px "Liberation Sans", sans-serif; }
.ref { fill: #a0a0a0; font-family: "Liberation Sans", sans-serif; }
.big { font-size: 18.500px; }
.small { font-size: 14.500px; }
.mid { font-size: 16px; }
.vector { font: 14px "Liberation Mono", monospace; }
```
